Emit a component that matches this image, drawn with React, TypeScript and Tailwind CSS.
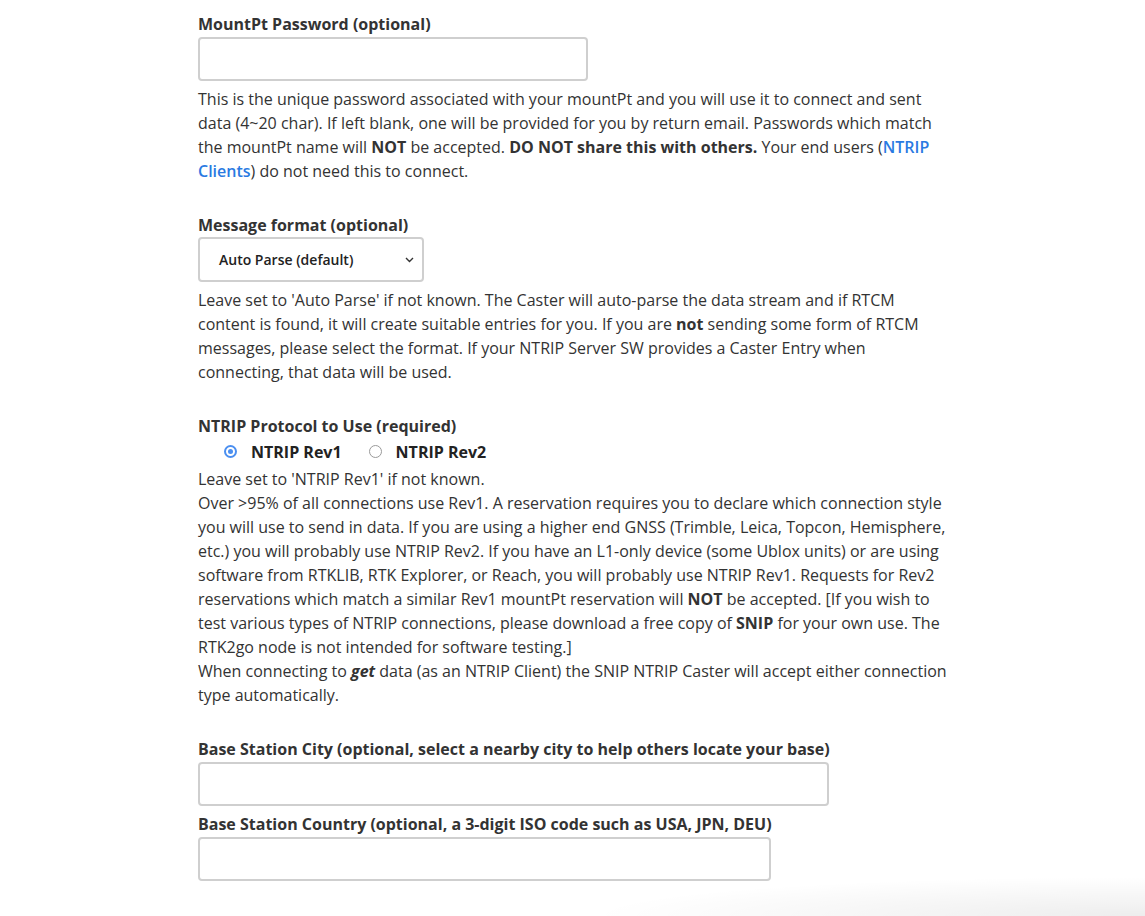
import React from "react";

const font = { fontFamily: '"Open Sans", "Liberation Sans", sans-serif' };

const Label: React.FC<{ children: React.ReactNode }> = ({ children }) => (
  <label className="block text-[16px] font-bold leading-6 text-[#333]">
    {children}
  </label>
);

const TextBox: React.FC<{ width: string }> = ({ width }) => (
  <input
    type="text"
    className={`${width} mt-[1px] block h-[44px] rounded-[4px] border-2 border-[#cfcfcf] bg-white px-3 text-[15px] outline-none`}
  />
);

const Radio: React.FC<{ checked?: boolean; label: string }> = ({
  checked,
  label,
}) => (
  <label className="flex items-center">
    {checked ? (
      <span className="flex h-[13px] w-[13px] items-center justify-center rounded-full border-2 border-[#4b8ff0] bg-white">
        <span className="h-[5px] w-[5px] rounded-full bg-[#4b8ff0]" />
      </span>
    ) : (
      <span className="h-[13px] w-[13px] rounded-full border border-[#9a9a9a] bg-white" />
    )}
    <span className="ml-[14px] text-[16px] font-bold text-[#222]">{label}</span>
  </label>
);

export default function App() {
  return (
    <div className="relative h-[916px] w-full overflow-hidden bg-white" style={font}>
      <div className="ml-[198px] w-[752px] pt-[12px] text-[16px] leading-6 text-[#333]">
        <Label>MountPt Password (optional)</Label>
        <TextBox width="w-[390px]" />
        <p className="mt-[6px]">
          This is the unique password associated with your mountPt and you will
          use it to connect and sent data (4~20 char). If left blank, one will be
          provided for you by return email. Passwords which match the mountPt
          name will <b>NOT</b> be accepted. <b>DO NOT share this with others.</b>{" "}
          Your end users (
          <a href="#" className="font-semibold text-[#2a7ae2]">
            NTRIP Clients
          </a>
          ) do not need this to connect.
        </p>

        <div className="mt-[30px]">
          <Label>Message format (optional)</Label>
          <div className="flex h-[45px] w-[226px] items-center justify-between rounded-[4px] border-2 border-[#cfcfcf] bg-white pl-[19px] pr-[8px]">
            <span className="text-[14px] font-semibold text-[#222]">
              Auto Parse (default)
            </span>
            <svg width="9" height="6" viewBox="0 0 9 6" fill="none">
              <path d="M1 1l3.5 3.5L8 1" stroke="#333" strokeWidth="1.4" />
            </svg>
          </div>
        </div>
        <p className="mt-[6px]">
          Leave set to 'Auto Parse' if not known. The Caster will auto-parse the
          data stream and if RTCM content is found, it will create suitable
          entries for you. If you are <b>not</b> sending some form of RTCM
          messages, please select the format. If your NTRIP Server SW provides a
          Caster Entry when connecting, that data will be used.
        </p>

        <div className="mt-[30px]">
          <Label>NTRIP Protocol to Use (required)</Label>
          <div className="flex h-[27px] items-center gap-[27px] pl-[26px]">
            <Radio checked label="NTRIP Rev1" />
            <Radio label="NTRIP Rev2" />
          </div>
        </div>
        <p className="mt-[2px]">
          Leave set to 'NTRIP Rev1' if not known.
          <br />
          Over &gt;95% of all connections use Rev1. A reservation requires you to
          declare which connection style you will use to send in data. If you are
          using a higher end GNSS (Trimble, Leica, Topcon, Hemisphere, etc.) you
          will probably use NTRIP Rev2. If you have an L1-only device (some Ublox
          units) or are using software from RTKLIB, RTK Explorer, or Reach, you
          will probably use NTRIP Rev1. Requests for Rev2 reservations which
          match a similar Rev1 mountPt reservation will <b>NOT</b> be accepted.
          [If you wish to test various types of NTRIP connections, please
          download a free copy of <b>SNIP</b> for your own use. The RTK2go node
          is not intended for software testing.]
          <br />
          When connecting to{" "}
          <b>
            <i>get</i>
          </b>{" "}
          data (as an NTRIP Client) the SNIP NTRIP Caster will accept either
          connection type automatically.
        </p>

        <div className="mt-[30px]">
          <Label>
            Base Station City (optional, select a nearby city to help others
            locate your base)
          </Label>
          <TextBox width="w-[631px]" />
        </div>
        <div className="mt-[6px]">
          <Label>
            Base Station Country (optional, a 3-digit ISO code such as USA, JPN,
            DEU)
          </Label>
          <TextBox width="w-[573px]" />
        </div>
      </div>
      <div className="pointer-events-none absolute bottom-0 right-0 h-[40px] w-[560px] bg-[radial-gradient(ellipse_at_bottom_right,rgba(0,0,0,0.07),rgba(0,0,0,0)_70%)]" />
    </div>
  );
}
